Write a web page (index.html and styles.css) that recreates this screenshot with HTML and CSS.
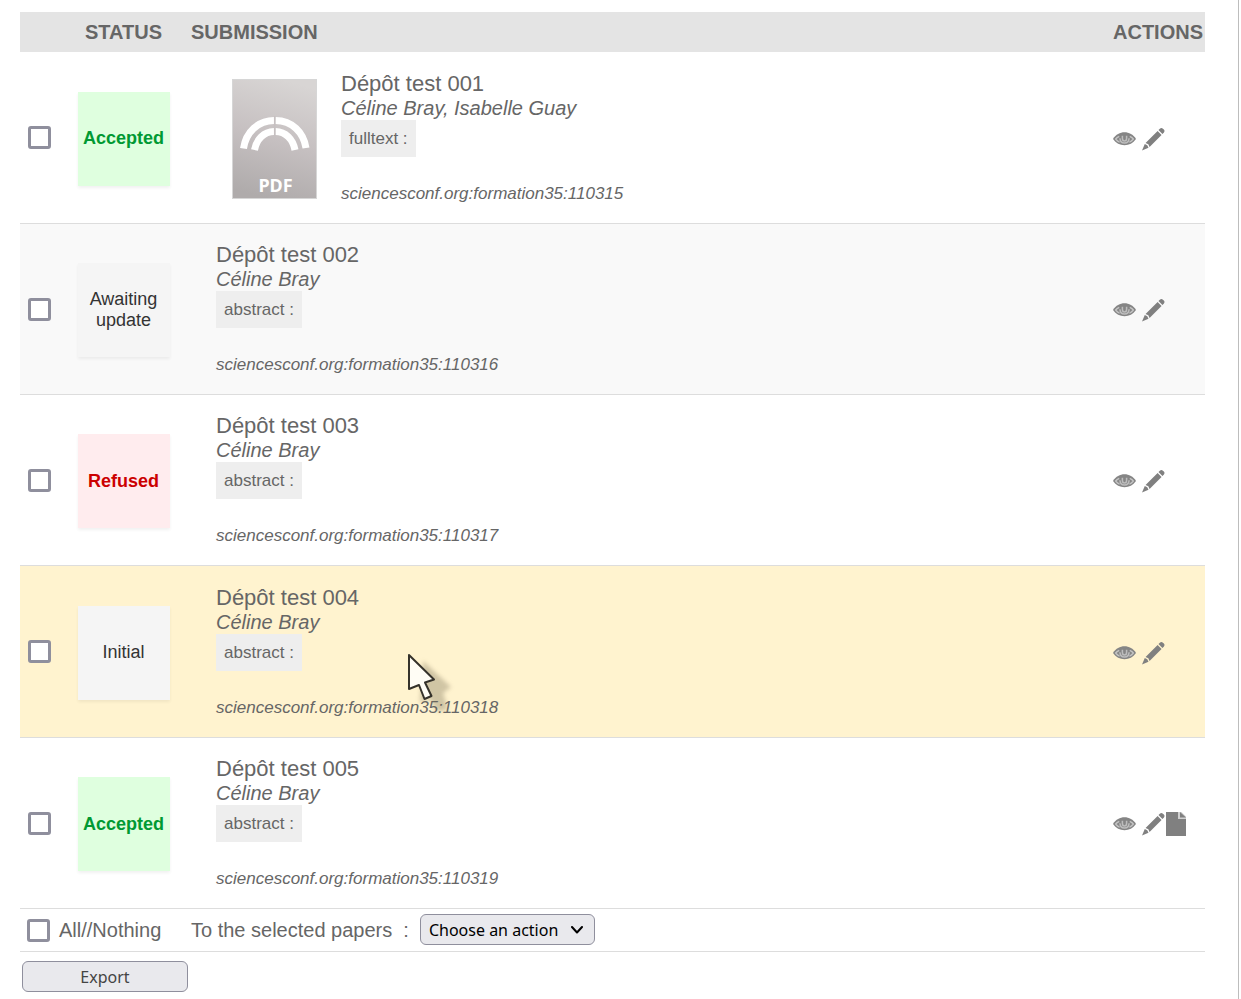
FILE: index.html
```
<!DOCTYPE html>
<html lang="en">
<head>
<meta charset="utf-8">
<title>Submissions</title>
<link rel="stylesheet" href="styles.css">
</head>
<body>
<svg class="sprite" aria-hidden="true">
  <defs>
    <symbol id="eye" viewBox="0 0 24 16">
      <path fill="#858585" d="M0 8C3 3.200 7.200 1 12 1s9 2.200 12 7c-3 4.400-7.200 6.500-12 6.500S3 12.400 0 8z"/>
      <path fill="none" stroke="#c4c4c4" stroke-width="1.400" d="M6.500 5.200C4.800 6 3.500 7 2.800 8c1.200 1.600 2.500 2.600 4.100 3.400M17.500 5.200c1.700.8 3 1.800 3.700 2.800-1.200 1.600-2.500 2.600-4.100 3.400"/>
      <path fill="none" stroke="#bdbdbd" stroke-width="1.600" d="M9.800 4.500v2.700a2.200 2.900 0 0 0 4.400 0V4.500M7.200 7.200c.2 3 1.800 5 4.800 5s4.600-2 4.800-5"/>
    </symbol>
    <symbol id="pencil" viewBox="0 0 24 24">
      <path fill="#808080" d="M17.200 2.700 18.600 1.300c1.100-1.100 2.300-1 3.200-.1l1 1c.9.900 1 2.100-.1 3.200l-1.400 1.400zM16.300 3.700l4.100 4.100L7.900 20.300l-1.300-2.900-2.900-1.300zM2.900 17.200l2.600 1.300 1.300 2.600L0 24z"/>
    </symbol>
    <symbol id="file" viewBox="0 0 20 24">
      <path fill="#808080" d="M0 0h12v7h8v17H0z"/>
      <path fill="#d0d0d0" d="M12 0h8v7h-8z"/>
      <path fill="#808080" d="M14 0 20 5.500h-6z"/>
      <path fill="#fff" d="M15.500 0H20v4.500z"/>
    </symbol>
  </defs>
</svg>
<main class="page">
  <table class="papers">
    <colgroup><col class="col-check"><col class="col-status"><col><col class="col-actions"></colgroup>
    <thead>
      <tr><th></th><th class="status">STATUS</th><th class="submission">SUBMISSION</th><th>ACTIONS</th></tr>
    </thead>
    <tbody>
      <tr>
        <td class="check"><input type="checkbox" class="box" aria-label="Select Dépôt test 001"></td>
        <td class="status"><div class="badge accepted">Accepted</div></td>
        <td class="submission">
          <div class="entry">
            <svg class="thumb" viewBox="0 0 85 120" role="img" aria-label="PDF">
              <defs><linearGradient id="cover" x1="0.600" y1="0" x2="0.400" y2="1"><stop offset="0" stop-color="#d8d5d4"/><stop offset="0.500" stop-color="#c6c0c1"/><stop offset="1" stop-color="#afabab"/></linearGradient></defs>
              <rect x="0.500" y="0.500" width="84" height="119" fill="url(#cover)" stroke="#d6d6d6"/>
              <g fill="none" stroke="#fff" stroke-width="7">
                <path d="M11.500 69.500C14 53 26 41.700 42 41.500M43.500 41.500C60 41.700 71.500 53 74 69"/>
                <path d="M22.500 71C24.500 60 32 52.700 42 52.500M43.500 52.500C53.500 52.700 61 60 63 71"/>
              </g>
              <path stroke="#c6c0c1" stroke-width="1.500" d="M42.700 37v20"/>
              <text class="thumb-text" x="43.500" y="113" text-anchor="middle">PDF</text>
            </svg>
            <div>
              <div class="title">Dépôt test 001</div>
              <div class="authors">Céline Bray, Isabelle Guay</div>
              <div class="kind">fulltext :</div>
              <div class="ident">sciencesconf.org:formation35:110315</div>
            </div>
          </div>
        </td>
        <td><div class="actions"><button class="act eye" aria-label="View"><svg><use href="#eye"/></svg></button><button class="act pencil" aria-label="Edit"><svg><use href="#pencil"/></svg></button></div></td>
      </tr>
      <tr class="alt">
        <td class="check"><input type="checkbox" class="box" aria-label="Select Dépôt test 002"></td>
        <td class="status"><div class="badge">Awaiting update</div></td>
        <td class="submission">
          <div class="entry"><div>
            <div class="title">Dépôt test 002</div>
            <div class="authors">Céline Bray</div>
            <div class="kind">abstract :</div>
            <div class="ident">sciencesconf.org:formation35:110316</div>
          </div></div>
        </td>
        <td><div class="actions"><button class="act eye" aria-label="View"><svg><use href="#eye"/></svg></button><button class="act pencil" aria-label="Edit"><svg><use href="#pencil"/></svg></button></div></td>
      </tr>
      <tr>
        <td class="check"><input type="checkbox" class="box" aria-label="Select Dépôt test 003"></td>
        <td class="status"><div class="badge refused">Refused</div></td>
        <td class="submission">
          <div class="entry"><div>
            <div class="title">Dépôt test 003</div>
            <div class="authors">Céline Bray</div>
            <div class="kind">abstract :</div>
            <div class="ident">sciencesconf.org:formation35:110317</div>
          </div></div>
        </td>
        <td><div class="actions"><button class="act eye" aria-label="View"><svg><use href="#eye"/></svg></button><button class="act pencil" aria-label="Edit"><svg><use href="#pencil"/></svg></button></div></td>
      </tr>
      <tr class="hovered">
        <td class="check"><input type="checkbox" class="box" aria-label="Select Dépôt test 004"></td>
        <td class="status"><div class="badge">Initial</div></td>
        <td class="submission">
          <div class="entry"><div>
            <div class="title">Dépôt test 004</div>
            <div class="authors">Céline Bray</div>
            <div class="kind">abstract :</div>
            <div class="ident">sciencesconf.org:formation35:110318</div>
          </div></div>
          <svg class="pointer" viewBox="0 0 60 66" aria-hidden="true">
            <path class="pointer-shadow" d="M17 9 45 35l-8 6 5 16-10 3-9-14-9 5z"/>
            <path fill="#fffdf5" stroke="#35322b" stroke-width="2" stroke-linejoin="round" d="M3 3v34l10-4 5.500 14 7-3-6.500-13.500 9-3z"/>
          </svg>
        </td>
        <td><div class="actions"><button class="act eye" aria-label="View"><svg><use href="#eye"/></svg></button><button class="act pencil" aria-label="Edit"><svg><use href="#pencil"/></svg></button></div></td>
      </tr>
      <tr>
        <td class="check"><input type="checkbox" class="box" aria-label="Select Dépôt test 005"></td>
        <td class="status"><div class="badge accepted">Accepted</div></td>
        <td class="submission">
          <div class="entry"><div>
            <div class="title">Dépôt test 005</div>
            <div class="authors">Céline Bray</div>
            <div class="kind">abstract :</div>
            <div class="ident">sciencesconf.org:formation35:110319</div>
          </div></div>
        </td>
        <td><div class="actions"><button class="act eye" aria-label="View"><svg><use href="#eye"/></svg></button><button class="act pencil" aria-label="Edit"><svg><use href="#pencil"/></svg></button><button class="act file" aria-label="Document"><svg><use href="#file"/></svg></button></div></td>
      </tr>
    </tbody>
    <tfoot>
      <tr>
        <td colspan="2"><label class="all"><input type="checkbox" class="box">All//Nothing</label></td>
        <td colspan="2" class="submission">
          <div class="bulk">
            <label for="bulk">To the selected papers&nbsp; :</label>
            <span class="picker">
              <select id="bulk"><option>Choose an action</option></select>
              <svg class="chevron" viewBox="0 0 12 8" aria-hidden="true"><path fill="none" stroke="#000" stroke-width="2" stroke-linecap="round" stroke-linejoin="round" d="M1 1l5 5.500L11 1"/></svg>
            </span>
          </div>
        </td>
      </tr>
    </tfoot>
  </table>
  <button class="export">Export</button>
</main>
</body>
</html>
```
FILE: styles.css
```
* {
  box-sizing: border-box;
}

body {
  margin: 0;
  background: #fff;
  color: #666;
  font: 20px/24px "Liberation Sans", Arial, sans-serif;
}

.sprite {
  position: absolute;
  width: 0;
  height: 0;
}

.page {
  min-height: 100vh;
  margin-right: 2px;
  padding: 12px 33px 7px 20px;
  border-right: 1px solid #bdbdbd;
}

.papers {
  width: 100%;
  table-layout: fixed;
  border-spacing: 0;
}

.col-check { width: 46px; }
.col-status { width: 115px; }
.col-actions { width: 92px; }

th {
  height: 40px;
  padding: 0;
  background: #e4e4e4;
  text-align: left;
}

td {
  padding: 0;
  border-bottom: 1px solid #ddd;
  vertical-align: middle;
}

.alt { background: #f9f9f9; }
.hovered { background: #fff3cf; }

.check {
  padding-left: 8px;
}

.box {
  display: block;
  appearance: none;
  width: 23px;
  height: 23px;
  margin: 0;
  border: 3px solid #8f8f9d;
  border-radius: 3px;
  background: #fff;
}

.status { text-align: center; }
td.status { padding-top: 2px; }

.badge {
  display: flex;
  align-items: center;
  justify-content: center;
  width: 92px;
  height: 94px;
  margin: 0 auto;
  background: #f5f5f5;
  color: #333;
  font-size: 18px;
  line-height: 21px;
  box-shadow: 0 2px 3px rgba(0, 0, 0, 0.06);
}

.accepted {
  background: #dfffdf;
  color: #093;
  font-weight: bold;
}

.refused {
  background: #ffecee;
  color: #c00;
  font-weight: bold;
}

.submission {
  position: relative;
  padding-left: 10px;
}

.entry {
  display: flex;
  align-items: flex-start;
  padding: 19px 0 19px 25px;
}

tbody tr:nth-child(3n + 1) .entry {
  padding-top: 20px;
}

.thumb {
  flex: none;
  width: 85px;
  height: 120px;
  margin: 7px 24px 0 16px;
}

.thumb-text {
  fill: #fff;
  font: bold 18px "Noto Sans", sans-serif;
}

.title { font-size: 22px; }
.authors { font-style: italic; }

.kind {
  width: fit-content;
  padding: 0 8px;
  background: #eee;
  font-size: 17px;
  line-height: 37px;
}

.ident {
  margin-top: 27px;
  font-size: 17px;
  line-height: 20px;
  font-style: italic;
}

.actions {
  display: flex;
  align-items: center;
  padding-top: 2px;
}

.act {
  padding: 0;
  border: 0;
  background: none;
}

.act svg {
  display: block;
  width: 100%;
  height: 100%;
}

.eye { width: 23px; height: 16px; }
.pencil { width: 23px; height: 24px; margin-left: 6px; }
.file { width: 20px; height: 24px; margin-left: 1px; }

.pointer {
  position: absolute;
  left: 225px;
  top: 86px;
  width: 60px;
  height: 66px;
}

.pointer-shadow {
  fill: rgba(110, 100, 75, 0.32);
  filter: blur(2px);
}

.all {
  display: flex;
  align-items: center;
  gap: 9px;
  padding-left: 7px;
}

.bulk {
  display: flex;
  align-items: center;
  gap: 11px;
  height: 42px;
  padding-bottom: 1px;
}

.picker {
  display: inline-flex;
  position: relative;
}

select,
.export {
  height: 31px;
  border: 1px solid #8f8f9d;
  border-radius: 6px;
  background: #e9e9ed;
  font: 16px "Noto Sans", sans-serif;
}

select {
  appearance: none;
  width: 175px;
  padding: 0 8px;
  color: #000;
}

.chevron {
  position: absolute;
  right: 12px;
  top: 12px;
  width: 12px;
  height: 8px;
  pointer-events: none;
}

.export {
  display: block;
  width: 166px;
  margin: 9px 2px 0;
  color: #444;
}
```
